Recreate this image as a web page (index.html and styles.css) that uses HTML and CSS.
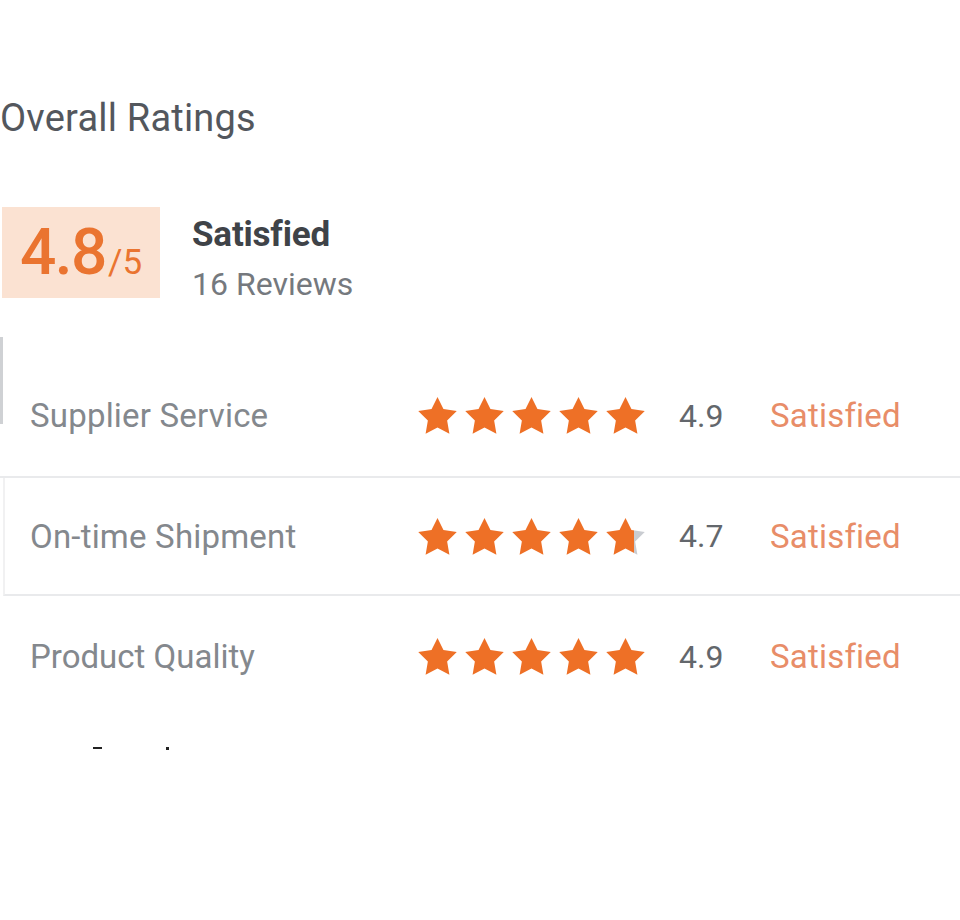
FILE: index.html
```html
<!DOCTYPE html>
<html lang="en">
<head>
<meta charset="utf-8">
<title>Overall Ratings</title>
<link rel="stylesheet" href="styles.css">
</head>
<body>
<svg width="0" height="0" class="defs" aria-hidden="true">
  <defs>
    <linearGradient id="partial" x1="0" x2="1" y1="0" y2="0">
      <stop offset="0.72" stop-color="#ee7026"/>
      <stop offset="0.72" stop-color="#c9ccd1"/>
    </linearGradient>
    <symbol id="star" viewBox="2 2 20 19.2">
      <path d="M12 2l3.09 6.26L22 9.27l-5 4.87 1.18 6.88L12 17.77l-6.18 3.25L7 14.14 2 9.27l6.91-1.01L12 2z"/>
    </symbol>
  </defs>
</svg>
<main class="page">
  <h2 class="title">Overall Ratings</h2>
  <section class="summary">
    <div class="score"><span class="big">4.8</span><span class="of">/5</span></div>
    <div class="summary-text">
      <div class="label">Satisfied</div>
      <div class="count">16 Reviews</div>
    </div>
  </section>
  <section class="rows">
    <div class="row">
      <span class="name">Supplier Service</span>
      <span class="stars">
        <svg class="star"><use href="#star"/></svg>
        <svg class="star"><use href="#star"/></svg>
        <svg class="star"><use href="#star"/></svg>
        <svg class="star"><use href="#star"/></svg>
        <svg class="star"><use href="#star"/></svg>
      </span>
      <span class="value">4.9</span>
      <span class="status">Satisfied</span>
    </div>
    <div class="row boxed">
      <span class="name">On-time Shipment</span>
      <span class="stars">
        <svg class="star"><use href="#star"/></svg>
        <svg class="star"><use href="#star"/></svg>
        <svg class="star"><use href="#star"/></svg>
        <svg class="star"><use href="#star"/></svg>
        <svg class="star partial"><use href="#star"/></svg>
      </span>
      <span class="value">4.7</span>
      <span class="status">Satisfied</span>
    </div>
    <div class="row last">
      <span class="name">Product Quality</span>
      <span class="stars">
        <svg class="star"><use href="#star"/></svg>
        <svg class="star"><use href="#star"/></svg>
        <svg class="star"><use href="#star"/></svg>
        <svg class="star"><use href="#star"/></svg>
        <svg class="star"><use href="#star"/></svg>
      </span>
      <span class="value">4.9</span>
      <span class="status">Satisfied</span>
    </div>
  </section>
  <div class="marks"><span class="dash"></span><span class="dot"></span></div>
</main>
</body>
</html>
```
FILE: styles.css
```css
html, body {
  margin: 0;
  padding: 0;
  background: #ffffff;
}
body {
  font-family: Roboto, "Liberation Sans", Arial, sans-serif;
  width: 960px;
  height: 920px;
  overflow: hidden;
}
.defs {
  display: block;
  width: 0;
  height: 0;
}
.page {
  display: flex;
  flex-direction: column;
  padding-top: 96px;
}
.title {
  margin: 0;
  font-size: 38px;
  font-weight: 400;
  line-height: 44px;
  color: #53575d;
  letter-spacing: 0.2px;
}
.summary {
  display: flex;
  align-items: flex-start;
  margin-top: 67px;
  padding-left: 2px;
}
.score {
  width: 158px;
  height: 91px;
  background: #fbe2d2;
  display: flex;
  align-items: baseline;
  justify-content: center;
  padding-top: 8px;
  box-sizing: border-box;
  color: #ea7430;
}
.big {
  font-size: 64px;
  font-weight: 500;
  line-height: 76px;
  letter-spacing: -1.5px;
}
.of {
  font-size: 35px;
  margin-left: 2px;
}
.summary-text {
  margin-left: 32px;
  display: flex;
  flex-direction: column;
  padding-top: 8px;
}
.label {
  font-size: 35px;
  font-weight: 700;
  color: #3f4348;
  line-height: 40px;
  letter-spacing: -0.2px;
}
.count {
  margin-top: 10px;
  font-size: 32px;
  color: #75797e;
  line-height: 38px;
}
.rows {
  position: relative;
  margin-top: 52px;
  display: flex;
  flex-direction: column;
}
.rows::before {
  content: "";
  position: absolute;
  left: 0;
  top: -18px;
  width: 3px;
  height: 87px;
  background: #cfd1d4;
}
.row {
  display: grid;
  grid-template-columns: 388px 261px 91px 1fr;
  align-items: center;
  height: 121px;
  padding-left: 30px;
  border-bottom: 2px solid #e9eaec;
}
.row.boxed {
  height: 116px;
  margin-left: 3px;
  padding-left: 25px;
  border-left: 2px solid #f1f1f2;
}
.row.last {
  border-bottom: none;
}
.name {
  font-size: 33px;
  color: #84888d;
  letter-spacing: 0.2px;
}
.row.last .name {
  letter-spacing: 0;
}
.stars {
  display: flex;
  gap: 8px;
}
.star {
  width: 39px;
  height: 37px;
  fill: #ee7026;
}
.star.partial {
  fill: url(#partial);
}
.value {
  font-size: 32px;
  color: #63676c;
}
.status {
  font-size: 33px;
  color: #e88d68;
  letter-spacing: 0.2px;
}
.marks {
  display: flex;
  align-items: center;
  margin-top: 30px;
  padding-left: 93px;
  height: 2px;
}
.dash {
  width: 9px;
  height: 2px;
  background: #222;
}
.dot {
  width: 3px;
  height: 3px;
  margin-left: 64px;
  background: #222;
}
```
